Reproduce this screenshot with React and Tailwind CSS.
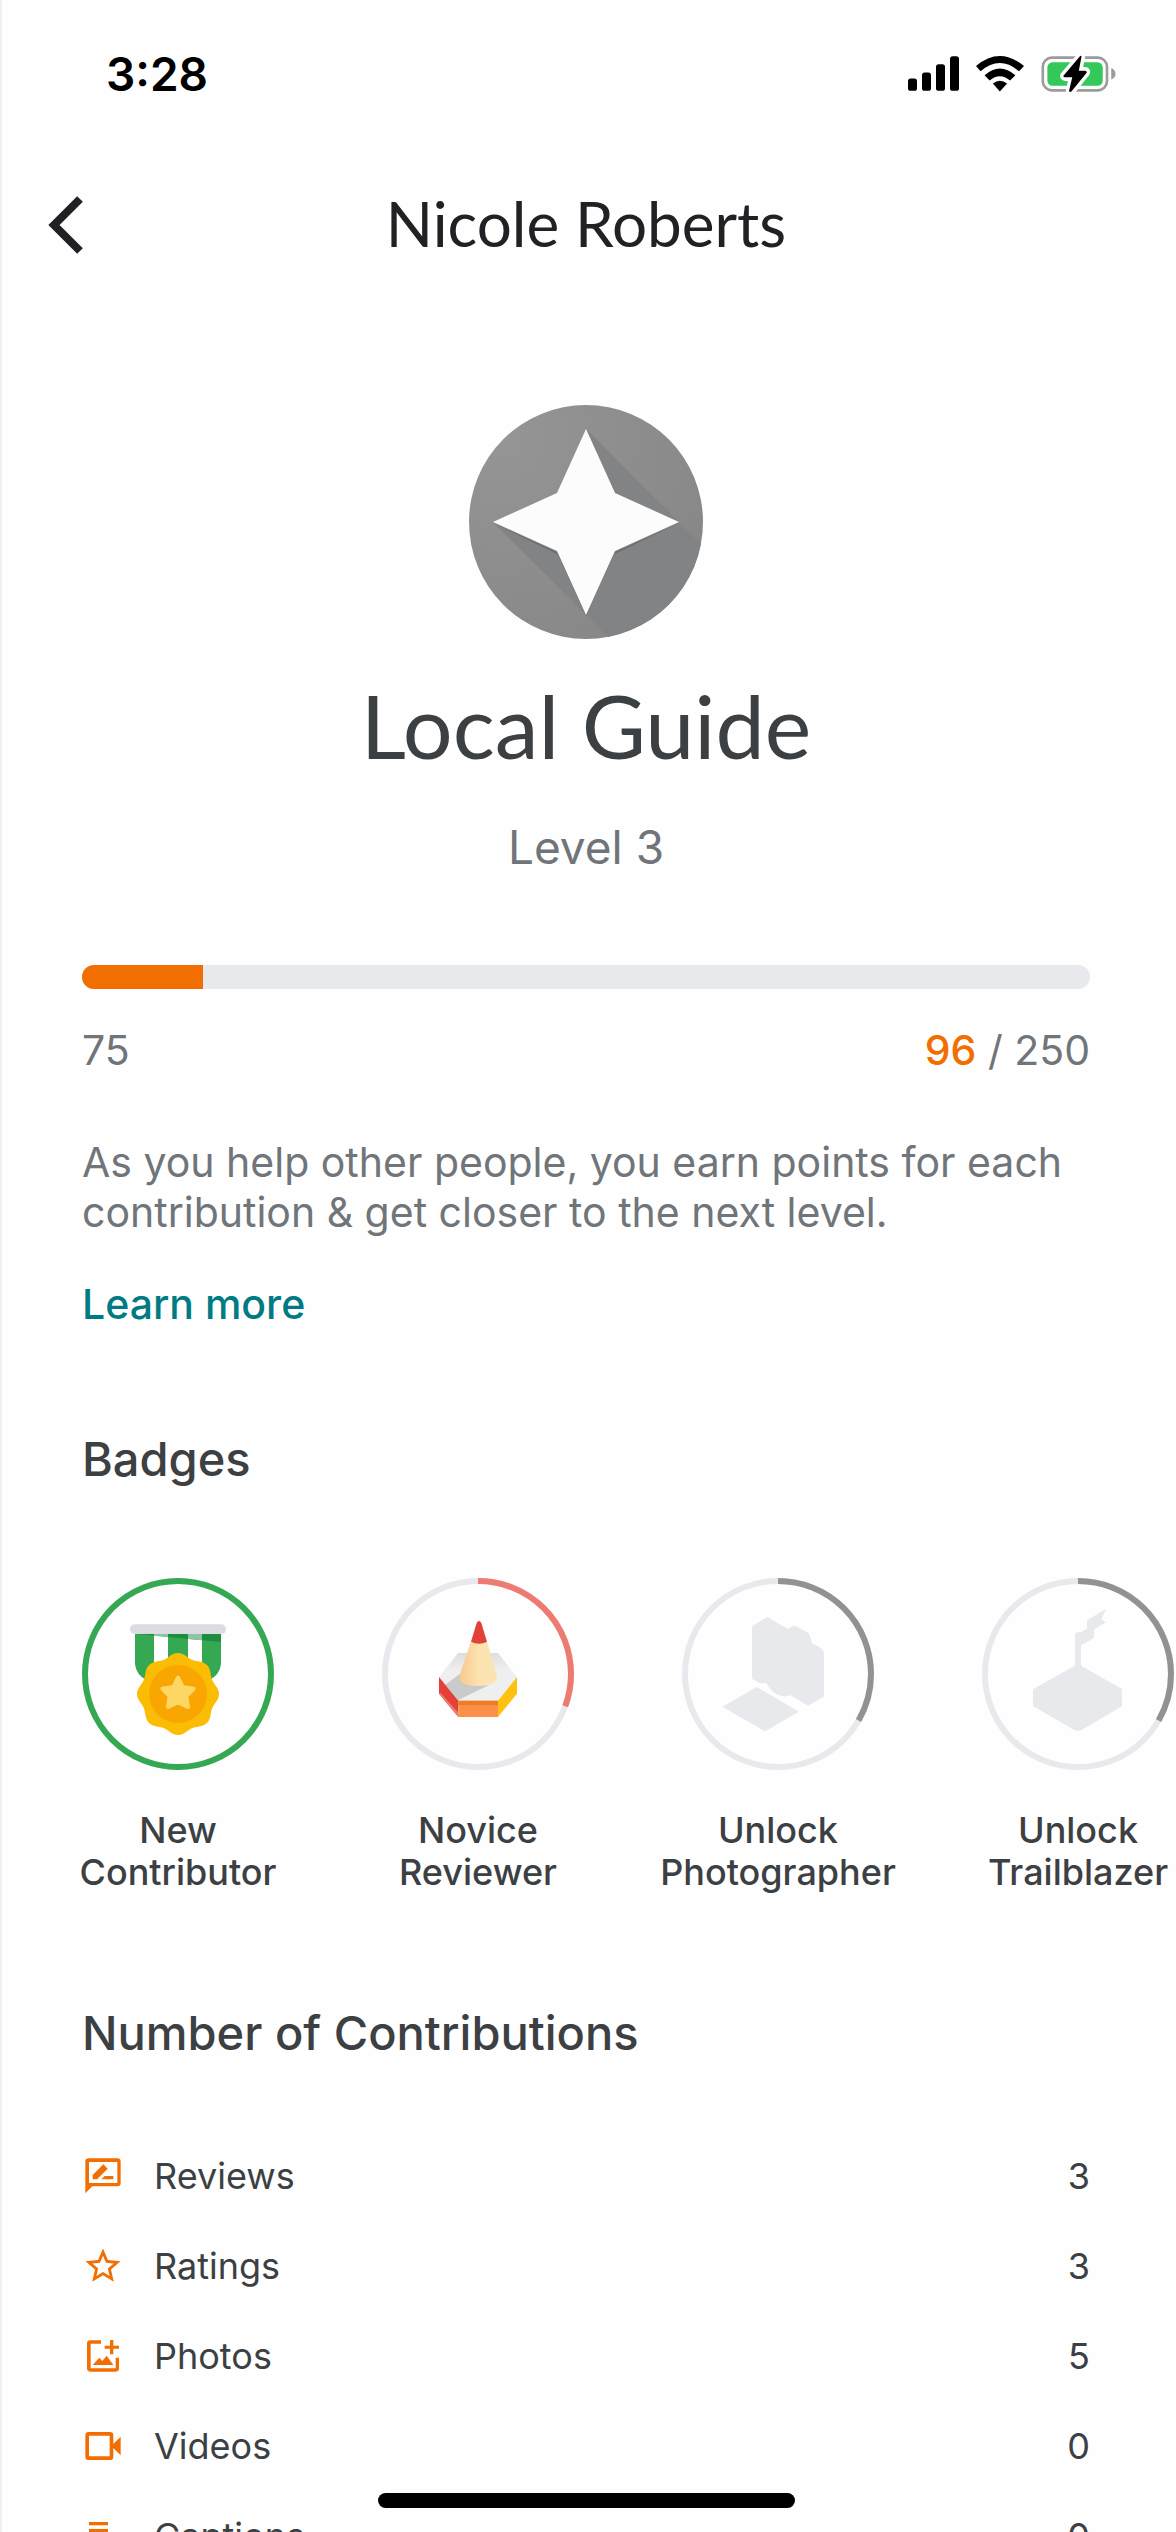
import React from 'react';
import { MdStarBorder } from 'react-icons/md';

const SignalIcon = () => (
  <svg viewBox="84 80 153 104" className="w-[51px] h-[35px]" aria-hidden="true">
    <rect x="84" y="147" width="27" height="37" rx="8" />
    <rect x="126" y="129" width="27" height="55" rx="8" />
    <rect x="168" y="104" width="27" height="80" rx="8" />
    <rect x="210" y="80" width="27" height="104" rx="8" />
  </svg>
);

const WifiIcon = () => (
  <svg viewBox="288 76 145 108" className="w-12 h-9" aria-hidden="true">
    <path d="M288 106 Q360 46 433 106 L418 122 Q360 72 302 122 Z" />
    <path d="M314 134 Q360 93 407 134 L391 150 Q360 123 329 150 Z" />
    <path d="M339 159 Q360 142 382 159 L360 183 Z" />
  </svg>
);

const BatteryIcon = () => (
  <svg viewBox="483 74 226 116" className="w-[75px] h-[38px]" aria-hidden="true">
    <rect x="487" y="82" width="196" height="100" rx="28" fill="none" stroke="#9b9b9b" strokeWidth="8" />
    <path d="M696 114 Q709 120 709 132 Q709 144 696 149 Z" fill="#9b9b9b" />
    <rect x="501" y="96" width="169" height="72" rx="16" fill="#34c759" />
    <path
      d="M601 78 L551 137 Q550 142 555 142 L577 142 L568 186 L574 186 L620 128 Q622 122 616 122 L597 122 L605 80 Z"
      fill="#fff"
      stroke="#fff"
      strokeWidth="22"
      strokeLinejoin="round"
    />
    <path d="M601 77 L550 137 Q549 142 554 142 L577 142 L567 184 Q570 190 575 185 L621 128 Q622 122 616 122 L597 122 L605 80 Q605 74 601 77 Z" />
  </svg>
);

const BackIcon = () => (
  <svg viewBox="0 0 36 60" className="w-9 h-[60px]" fill="none" stroke="#202124" strokeWidth="8" aria-hidden="true">
    <path d="M32 4 L6 30 L32 56" />
  </svg>
);

const GuideEmblem = () => (
  <svg viewBox="0 0 234 234" className="size-[234px]" role="img" aria-label="Local Guide">
    <defs>
      <radialGradient id="emblem" cx="15%" cy="15%" r="100%">
        <stop offset="0" stopColor="#959595" />
        <stop offset="1" stopColor="#878787" />
      </radialGradient>
      <clipPath id="emblemClip">
        <circle cx="117" cy="117" r="117" />
      </clipPath>
    </defs>
    <circle cx="117" cy="117" r="117" fill="url(#emblem)" />
    <path d="M117 24 L146 88 L88 146 L24 117 L224 317 L317 224 Z" fill="#818385" clipPath="url(#emblemClip)" />
    <path d="M24 118 L88 147 L117 211 L146 147 L210 118 L146 149 L88 149 Z" fill="#6b6e71" />
    <path d="M117 24 L146 88 L210 117 L146 146 L117 210 L88 146 L24 117 L88 88 Z" fill="#fcfcfc" />
  </svg>
);

// closed wavy outline with 8 lobes
const scallop = (cx, cy, r, depth) => {
  const points = [];
  for (let deg = 0; deg < 360; deg += 3) {
    const a = (deg * Math.PI) / 180;
    const radius = r + depth * Math.cos(8 * a);
    points.push(`${(cx + radius * Math.sin(a)).toFixed(1)},${(cy - radius * Math.cos(a)).toFixed(1)}`);
  }
  return points.join(' ');
};

const MedalArt = () => (
  <g transform="translate(-66 -54)">
    <path d="M225 215 H483 V312 Q480 345 445 362 H262 Q228 345 225 312 Z" fill="#34a853" />
    <path d="M282 215 H324 V320 H282 Z M384 215 H426 V320 H384 Z" fill="#fff" />
    <path d="M225 221 H483 V246 Z" fill="#1e8e3e" />
    <path d="M282 221 H324 V231 L282 227 Z M384 221 H426 V241 L384 237 Z" fill="#8cc5a4" />
    <rect x="210" y="193" width="288" height="29" rx="14" fill="#dadce0" />
    <polygon points={scallop(354, 402, 117, 6)} fill="#fbbc04" />
    <circle cx="354" cy="402" r="87" fill="#f9a602" />
    <path
      d="M354 353 L368 381 L401 386 L379 409 L384 441 L354 427 L324 441 L329 409 L307 386 L340 381 Z"
      fill="#fdd663"
      stroke="#fdd663"
      strokeWidth="12"
      strokeLinejoin="round"
    />
  </g>
);

const PencilArt = () => (
  <g transform="translate(-66 -54)">
    <defs>
      <linearGradient id="hexTop" x1="0" y1="0" x2="0" y2="1">
        <stop offset="0" stopColor="#dcdde0" />
        <stop offset="0.35" stopColor="#efefef" />
      </linearGradient>
      <linearGradient id="wood" x1="0" y1="0" x2="1" y2="0">
        <stop offset="0" stopColor="#f8c88a" />
        <stop offset="0.55" stopColor="#fce4b2" />
      </linearGradient>
    </defs>
    <path d="M294 279 H414 L471 351 L414 422 H294 L237 351 Z" fill="url(#hexTop)" />
    <path d="M298 343 L256 374 L294 421 L388 374 Z" fill="#c9cbcb" />
    <path d="M237 351 L295 422 V471 L237 401 Z" fill="#e34037" />
    <path d="M237 401 L295 471 V458 L240 397 Z" fill="#ee7a70" />
    <path d="M295 422 H414 V471 H295 Z" fill="#fc9048" />
    <path d="M295 422 H414 V436 H295 Z" fill="#f07b25" />
    <path d="M471 351 V401 L414 471 V422 Z" fill="#fec111" />
    <path d="M333 244 L297 352 Q300 378 354 378 Q408 378 412 352 L381 244 Z" fill="url(#wood)" />
    <path d="M350 189 Q357 177 364 189 L381 245 Q357 257 333 245 Z" fill="#e34037" />
  </g>
);

const CameraArt = () => (
  <g transform="translate(-126 -54)" fill="#e8e9ed">
    <path d="M382 171 L444 207 Q456 196 466 197 L505 219 Q509 222 516 249 L539 262 Q552 270 552 284 V409 L505 437 L449 405 Q433 414 410 403 Q393 394 379 369 Q365 371 357 369 L336 356 V204 Q337 197 343 194 Z" />
    <path d="M350 381 L477 455 L375 514 L247 440 Z" />
  </g>
);

const FlagArt = () => (
  <g transform="translate(-126 -54)" fill="#e8e9ed">
    <path d="M405 222 Q413 212 420 218 L441 206 V181 L498 147 L484 178 L498 187 L462 208 V234 L423 256 V317 L546 387 V439 L428 508 Q414 517 399 508 L279 438 V388 L405 317 Z" />
  </g>
);

const ProgressRing = ({ percent, color, children }) => (
  <svg viewBox="0 0 576 576" className="size-48" aria-hidden="true">
    <circle cx="288" cy="288" r="279" fill="none" stroke="#e8e9ed" strokeWidth="18" />
    <circle
      cx="288"
      cy="288"
      r="279"
      fill="none"
      stroke={color}
      strokeWidth="18"
      pathLength="100"
      strokeDasharray={`${percent} 100`}
      transform="rotate(-90 288 288)"
    />
    {children}
  </svg>
);

const ReviewIcon = () => (
  <svg viewBox="0 0 126 126" className="size-[42px]" fill="#f26e00" aria-hidden="true">
    <path
      fillRule="evenodd"
      d="M20 10 H106 Q116 10 116 20 V84 Q116 94 106 94 H31 L10 115 V20 Q10 10 20 10 Z M21 21 V84 H106 V21 Z"
    />
    <path d="M32 73 V60 L64 28 L77 41 L45 73 Z M58 73 L68 63 H94 V73 Z" />
  </svg>
);

const PhotoIcon = () => (
  <svg viewBox="0 0 126 126" className="size-[42px]" fill="#f26e00" aria-hidden="true">
    <path d="M57 16 V26 H26 V100 H101 V68 H111 V100 Q111 110 101 110 H25 Q15 110 15 100 V26 Q15 16 25 16 Z" />
    <path d="M84 15 H94 V32 H111 V41 H94 V58 H84 V41 H68 V32 H84 Z" />
    <path d="M32 90 L52 68 L61 78 L74 62 L94 90 Z" />
  </svg>
);

const VideoIcon = () => (
  <svg viewBox="0 0 126 126" className="size-[42px]" fill="#f26e00" aria-hidden="true">
    <path
      fillRule="evenodd"
      d="M20 21 H84 Q94 21 94 31 V57 L116 35 V91 L94 69 V95 Q94 105 84 105 H20 Q10 105 10 95 V31 Q10 21 20 21 Z M21 32 V94 H83 V32 Z"
    />
  </svg>
);

const CaptionIcon = () => (
  <svg viewBox="0 0 126 126" className="size-[42px]" fill="#f26e00" aria-hidden="true">
    <path d="M21 21 H78 V31 H21 Z M21 42 H78 V52 H21 Z M21 63 H105 V73 H21 Z M21 84 H105 V94 H21 Z" />
  </svg>
);

const badges = [
  { title: ['New', 'Contributor'], percent: 100, color: '#34a853', art: <MedalArt /> },
  { title: ['Novice', 'Reviewer'], percent: 30.6, color: '#ee7b72', art: <PencilArt /> },
  { title: ['Unlock', 'Photographer'], percent: 33.3, color: '#929292', art: <CameraArt /> },
  { title: ['Unlock', 'Trailblazer'], percent: 33.3, color: '#929292', art: <FlagArt /> },
];

const contributions = [
  { label: 'Reviews', count: 3, icon: <ReviewIcon /> },
  { label: 'Ratings', count: 3, icon: <MdStarBorder className="size-[42px] text-[#f26e00]" /> },
  { label: 'Photos', count: 5, icon: <PhotoIcon /> },
  { label: 'Videos', count: 0, icon: <VideoIcon /> },
  { label: 'Captions', count: 0, icon: <CaptionIcon /> },
];

const levelStart = 75;
const levelEnd = 250;
const points = 96;

const App = () => {
  const progress = ((points - levelStart) / (levelEnd - levelStart)) * 100;

  return (
    <div className="relative h-screen overflow-hidden border-l-2 border-[#f0f0f0] bg-[#fefefe] font-['Inter',sans-serif] text-[#3c4043]">
      <div className="flex h-[147px] items-center justify-between pl-[104px] pr-[60px] text-black">
        <span className="text-[46px] leading-[56px] font-semibold">3:28</span>
        <div className="flex items-center gap-[17px]">
          <SignalIcon />
          <WifiIcon />
          <BatteryIcon />
        </div>
      </div>

      <header className="grid h-[156px] grid-cols-[84px_1fr_84px] items-center pr-1.5">
        <button type="button" aria-label="Back" className="pl-[46px]">
          <BackIcon />
        </button>
        <h1 className="pb-1 text-center font-['Lato',sans-serif] text-[62px] leading-[72px] text-[#202124]">Nicole Roberts</h1>
      </header>

      <main>
        <section className="flex flex-col pt-[102px] pl-20 pr-[86px]">
          <div className="flex flex-col items-center">
            <GuideEmblem />
            <h2 className="mt-[38px] font-['Lato',sans-serif] text-[88px] leading-[96px]">Local Guide</h2>
            <p className="mt-[46px] text-[46px] leading-[56px] text-[#70757a]">Level 3</p>
          </div>

          <div className="mt-[90px] h-6 overflow-hidden rounded-full bg-[#e8e9ed]">
            <div className="h-full bg-[#f26e00]" style={{ width: `${progress}%` }} />
          </div>
          <div className="mt-9 flex justify-between text-[41px] leading-[50px] text-[#70757a]">
            <span>{levelStart}</span>
            <span>
              <span className="font-medium text-[#f26e00]">{points}</span> / {levelEnd}
            </span>
          </div>

          <p className="mt-[62px] text-[41px] leading-[50px] text-[#70757a]">
            As you help other people, you earn points for each contribution & get closer to the next level.
          </p>
          <a href="#learn-more" className="mt-[42px] self-start text-[41px] leading-[50px] font-medium text-[#007b83]">
            Learn more
          </a>
        </section>

        <section className="mt-[102px]">
          <h2 className="pl-20 text-[47px] leading-[56px] font-medium">Badges</h2>
          <ul className="mt-[91px] flex overflow-hidden pl-[26px]">
            {badges.map((badge) => (
              <li key={badge.title[1]} className="flex w-[300px] shrink-0 flex-col items-center">
                <ProgressRing percent={badge.percent} color={badge.color}>
                  {badge.art}
                </ProgressRing>
                <p className="mt-[39px] text-center text-[36px] leading-[42px] font-medium">
                  {badge.title[0]}
                  <br />
                  {badge.title[1]}
                </p>
              </li>
            ))}
          </ul>
        </section>

        <section className="mt-28 pl-20 pr-[86px]">
          <h2 className="text-[47px] leading-[56px] font-medium">Number of Contributions</h2>
          <ul className="mt-[70px]">
            {contributions.map((item) => (
              <li key={item.label} className="flex h-[90px] items-center text-[36px] leading-[44px]">
                {item.icon}
                <span className="ml-[30px] flex-1">{item.label}</span>
                <span>{item.count}</span>
              </li>
            ))}
          </ul>
        </section>
      </main>

      {/* home indicator */}
      <div className="absolute inset-x-0 bottom-6 flex justify-center pr-1.5">
        <div className="h-[15px] w-[417px] rounded-full bg-black" />
      </div>
    </div>
  );
};

export default App;
